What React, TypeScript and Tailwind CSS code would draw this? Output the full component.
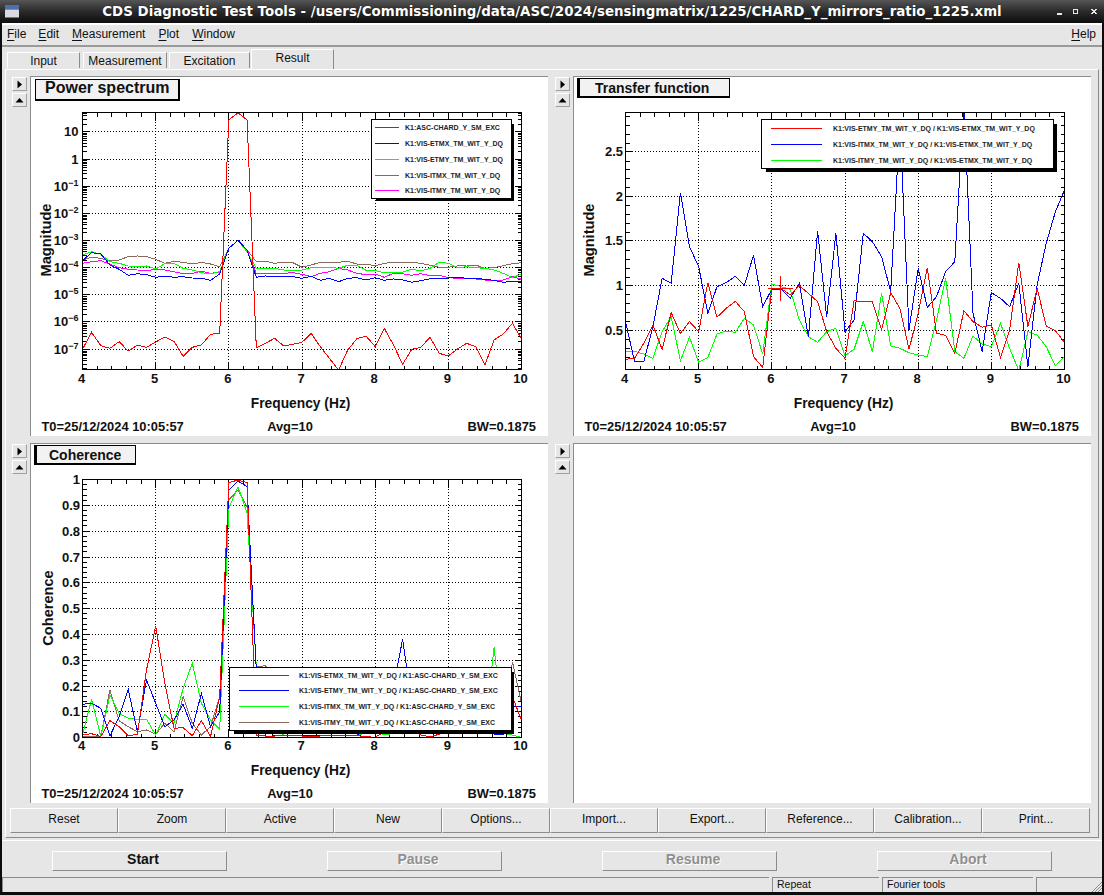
import React from "react";

const RED = "#ff0000", BLUE = "#0000ff", GREEN = "#00ff00", BROWN = "#8a6a5c", MAG = "#ff00ff";

type Trace = { color: string; z: number[] };
type Tick = { y: number; label: string; sup?: string };
type Legend = { x1: number; x2: number; y1: number; y2: number; sx: number; sy: number; lineX1: number; lineX2: number; textX: number; rows: { y: number; color: string; text: string }[] };

type PlotProps = {
  id: string;
  ox: number;
  oy: number;
  top: number;
  bottom: number;
  left: number;
  zBase: number;
  traces: Trace[];
  ticks: Tick[];
  minors: number[];
  title: string;
  titleBox: [number, number, number, number];
  titleSize: number;
  titleX: number;
  titleY: number;
  titleLeft: number;
  titleRight: number;
  yTitle: string;
  yTitleX: number;
  yTitleY: number;
  legend: Legend;
  labelRight: number;
  freqY: number;
  tickY: number;
  footY: number;
  extra?: React.ReactNode;
};

const FONT = "'Liberation Sans', Arial, sans-serif";

function Plot(p: PlotProps) {
  const step = 439 / 48;
  const right = p.left + 439;
  const xs = (n: number) => p.left + n * step;
  const xMajor = [0, 1, 2, 3, 4, 5, 6];
  const xMinor: number[] = [];
  for (let i = 0; i < 30; i++) if (i % 5 !== 0) xMinor.push(p.left + (i * 439) / 30);
  const tx = p.ox;
  return (
    <svg width={517} height={359} viewBox={`${p.ox + 1} ${p.oy + 1} 517 359`} className="block" style={{ fontFamily: FONT }}>
      <defs>
        <clipPath id={p.id}>
          <rect x={p.left} y={p.top} width={439} height={p.bottom - p.top} />
        </clipPath>
      </defs>
      <g shapeRendering="crispEdges" stroke="#000" strokeWidth={1} fill="none">
        {xMajor.slice(1, 6).map((i) => (
          <line key={i} x1={p.left + (i * 439) / 6} x2={p.left + (i * 439) / 6} y1={p.top} y2={p.bottom} strokeDasharray="1 2" />
        ))}
        {p.ticks.filter((t) => t.y > p.top + 2 && t.y < p.bottom - 2).map((t) => (
          <line key={t.y} x1={p.left} x2={right} y1={t.y + 0.5} y2={t.y + 0.5} strokeDasharray="1 2" />
        ))}
        {xMajor.map((i) => {
          const x = p.left + (i * 439) / 6;
          return (
            <g key={i}>
              <line x1={x} x2={x} y1={p.top} y2={p.top + 8} />
              <line x1={x} x2={x} y1={p.bottom} y2={p.bottom - 8} />
            </g>
          );
        })}
        {xMinor.map((x) => (
          <g key={x}>
            <line x1={x} x2={x} y1={p.top} y2={p.top + 4} />
            <line x1={x} x2={x} y1={p.bottom} y2={p.bottom - 4} />
          </g>
        ))}
        {p.ticks.map((t) => (
          <g key={t.y}>
            <line x1={p.left} x2={p.left + 7} y1={t.y + 0.5} y2={t.y + 0.5} />
            <line x1={right} x2={right - 7} y1={t.y + 0.5} y2={t.y + 0.5} />
          </g>
        ))}
        {p.minors.map((y) => (
          <g key={y}>
            <line x1={p.left} x2={p.left + 4} y1={y} y2={y} />
            <line x1={right} x2={right - 4} y1={y} y2={y} />
          </g>
        ))}
      </g>
      <g clipPath={`url(#${p.id})`} fill="none" strokeWidth={1} shapeRendering="crispEdges">
        {p.traces.map((t, i) => (
          <polyline key={i} stroke={t.color} points={t.z.map((z, n) => `${xs(n).toFixed(1)},${(p.zBase + z / 3).toFixed(1)}`).join(" ")} />
        ))}
        {p.extra}
      </g>
      <rect x={p.left} y={p.top} width={439} height={p.bottom - p.top} fill="none" stroke="#000" shapeRendering="crispEdges" />

      <g fontWeight={700} fontSize={13} fill="#111">
        {p.ticks.map((t) => (
          <text key={t.y} x={p.labelRight} y={t.y + 5} textAnchor="end">
            {t.label}
            {t.sup ? <tspan fontSize={9} dy={-5}>{t.sup}</tspan> : null}
          </text>
        ))}
        {xMajor.map((i) => (
          <text key={i} x={p.left + (i * 439) / 6 - 1} y={p.tickY} textAnchor="middle">
            {4 + i}
          </text>
        ))}
        <text x={tx + 270.6} y={p.freqY} fontSize={13.8} textAnchor="middle">Frequency (Hz)</text>
        <text x={p.yTitleX} y={p.yTitleY} fontSize={14.6} textAnchor="middle" transform={`rotate(-90 ${p.yTitleX} ${p.yTitleY})`}>{p.yTitle}</text>
        <text x={tx + 11.5} y={p.footY} fontSize={12.9}>T0=25/12/2024 10:05:57</text>
        <text x={tx + 260} y={p.footY} fontSize={12.9} textAnchor="middle">Avg=10</text>
        <text x={tx + 506} y={p.footY} fontSize={12.9} textAnchor="end">BW=0.1875</text>
      </g>

      <g shapeRendering="crispEdges">
        <rect x={p.legend.x1 + 5} y={p.legend.y1 + 5} width={p.legend.sx - p.legend.x1 - 5} height={p.legend.sy - p.legend.y1 - 5} fill="#000" />
        <rect x={p.legend.x1 + 0.5} y={p.legend.y1 + 0.5} width={p.legend.x2 - p.legend.x1} height={p.legend.y2 - p.legend.y1} fill="#fff" stroke="#000" />
        {p.legend.rows.map((r) => (
          <line key={r.y} x1={p.legend.lineX1} x2={p.legend.lineX2} y1={r.y + 0.5} y2={r.y + 0.5} stroke={r.color} />
        ))}
      </g>
      <g fontWeight={700} fontSize={7} fill="#222">
        {p.legend.rows.map((r) => (
          <text key={r.y} x={p.legend.textX} y={r.y + 3}>{r.text}</text>
        ))}
      </g>

      <g shapeRendering="crispEdges">
        <rect x={p.titleBox[0]} y={p.titleBox[1]} width={p.titleBox[2] - p.titleBox[0]} height={p.titleBox[3] - p.titleBox[1]} fill="#000" />
        <rect
          x={p.titleBox[0] + p.titleLeft}
          y={p.titleBox[1] + 1}
          width={p.titleBox[2] - p.titleBox[0] - p.titleLeft - p.titleRight}
          height={p.titleBox[3] - p.titleBox[1] - 3}
          fill="#f2f2f2"
        />
      </g>
      <text x={p.titleX} y={p.titleY} fontWeight={700} fontSize={p.titleSize} fill="#111">{p.title}</text>
    </svg>
  );
}

/* traces, sampled every 0.125 Hz; values are vertical positions read off the picture */
const p1Red = [748,697,737,745,725,753,736,742,726,711,724,769,742,735,703,700,60,38,60,743,730,715,738,733,727,700,740,775,810,750,716,708,740,685,735,793,748,742,712,760,768,747,730,740,795,720,702,670,716];
const p1Blue = [482,458,462,495,508,526,521,524,532,528,532,530,534,535,541,522,445,421,450,532,528,530,530,530,535,529,541,535,545,535,533,540,533,541,537,540,547,542,536,535,534,532,535,535,538,541,547,544,544];
const p1Green = [465,455,463,485,490,498,499,498,507,491,490,505,510,518,521,515,445,421,455,505,505,505,510,510,510,503,502,502,505,496,496,511,512,518,518,517,507,513,505,487,490,503,500,503,505,510,520,533,522];
const p1Brown = [480,472,475,483,480,470,468,470,478,490,484,487,492,487,492,500,445,421,450,485,484,490,486,488,502,495,487,489,487,484,492,492,497,490,487,487,487,490,496,502,502,498,495,495,505,503,497,491,488];
const p1Mag = [490,485,482,492,503,508,510,512,508,510,515,521,520,514,520,517,445,421,450,521,520,521,520,518,523,530,520,515,505,510,520,524,522,532,520,521,526,521,527,526,533,535,535,537,540,541,540,530,538];

const p2Blue = [665,785,785,680,535,550,278,440,500,640,560,548,529,556,466,620,568,568,595,550,710,393,652,400,695,660,400,425,470,575,65,690,505,622,590,515,485,10,640,755,578,595,620,550,800,555,430,335,270];
const p2Red = [778,775,730,675,748,638,700,665,695,548,652,625,604,635,770,802,565,565,585,557,580,605,695,745,775,602,605,605,690,578,625,748,640,503,700,706,760,632,665,682,675,772,690,488,680,565,678,692,727];
const p2Green = [754,754,762,775,695,650,782,712,787,773,702,693,697,655,675,762,552,560,568,660,710,727,695,685,767,748,665,755,580,738,745,758,765,770,660,535,755,775,708,732,740,670,745,812,695,705,740,797,770];

const p3Red = [795,791,800,752,770,797,793,600,468,640,775,773,797,752,800,680,38,30,38,795,798,798,797,797,798,798,798,797,797,797,797,800,802,785,770,780,780,795,800,793,770,760,780,790,790,790,780,680,750];
const p3Blue = [703,700,715,798,740,658,785,630,700,770,750,703,775,670,770,725,60,33,50,600,800,797,797,797,797,797,797,797,797,797,795,780,775,720,650,508,700,770,780,780,780,780,780,780,700,793,793,708,708];
const p3Green = [795,688,800,675,730,745,748,748,795,733,760,655,580,700,750,778,115,50,130,590,700,780,795,795,795,795,795,795,795,795,795,790,780,795,790,780,780,780,785,785,785,785,780,780,780,532,790,795,802];
const p3Brown = [800,800,798,660,752,770,785,780,793,760,785,680,760,795,770,680,90,60,110,590,587,620,760,780,785,790,790,790,790,790,790,790,785,790,790,785,785,785,790,790,790,790,790,790,790,790,790,575,700];

const p1Ticks: Tick[] = [
  { y: 131, label: "10" },
  { y: 159, label: "1" },
  { y: 186, label: "10", sup: "−1" },
  { y: 213, label: "10", sup: "−2" },
  { y: 240, label: "10", sup: "−3" },
  { y: 267, label: "10", sup: "−4" },
  { y: 294, label: "10", sup: "−5" },
  { y: 321, label: "10", sup: "−6" },
  { y: 349, label: "10", sup: "−7" },
];
const p1Minors: number[] = [];
for (let d = -8; d <= 1; d++) {
  for (let k = 2; k <= 9; k++) {
    const y = 159.5 - (d + Math.log10(k)) * 27.2;
    if (y > 113 && y < 369) p1Minors.push(Math.round(y * 10) / 10);
  }
}

const p2Ticks: Tick[] = [
  { y: 151, label: "2.5" },
  { y: 196, label: "2" },
  { y: 240, label: "1.5" },
  { y: 285, label: "1" },
  { y: 330, label: "0.5" },
];
const p2Minors: number[] = [];
for (let i = -3; i < 30; i++) {
  const y = 330.5 - i * 8.92;
  if (i % 5 !== 0 && y > 113 && y < 369) p2Minors.push(Math.round(y * 10) / 10);
}

const p3Ticks: Tick[] = [
  { y: 479, label: "1" },
  { y: 505, label: "0.9" },
  { y: 531, label: "0.8" },
  { y: 557, label: "0.7" },
  { y: 582, label: "0.6" },
  { y: 608, label: "0.5" },
  { y: 634, label: "0.4" },
  { y: 660, label: "0.3" },
  { y: 686, label: "0.2" },
  { y: 711, label: "0.1" },
  { y: 737, label: "0" },
];
const p3Minors: number[] = [];
for (let i = 0; i < 50; i++) if (i % 5 !== 0) p3Minors.push(Math.round((737.5 - i * 5.16) * 10) / 10);

function SmallButton({ dir }: { dir: "right" | "up" }) {
  return (
    <div className="w-[15px] h-[14px] flex items-center justify-center border border-t-white border-l-white border-b-[#a0a0a0] border-r-[#a0a0a0]">
      <svg width="9" height="9" viewBox="0 0 9 9">
        {dir === "right" ? <path d="M2.5 0.5 L7 4.5 L2.5 8.5 Z" fill="#000" /> : <path d="M0.5 6.5 L4.5 2 L8.5 6.5 Z" fill="#000" />}
      </svg>
    </div>
  );
}

function Cell({ children }: { children?: React.ReactNode }) {
  return (
    <div className="flex">
      <div className="w-[15px] mr-[3px] flex flex-col gap-[2px]">
        <SmallButton dir="right" />
        <SmallButton dir="up" />
      </div>
      <div className="w-[518px] h-[360px] -mt-px border-t border-l border-[#8c8c8c] bg-white">{children}</div>
    </div>
  );
}

function M({ a, b, ml }: { a: string; b: string; ml: string }) {
  return (
    <span className={ml}>
      <span className="underline underline-offset-2">{a}</span>
      {b}
    </span>
  );
}

const actionLabels = ["Reset", "Zoom", "Active", "New", "Options...", "Import...", "Export...", "Reference...", "Calibration...", "Print..."];
const runLabels: [string, boolean][] = [["Start", true], ["Pause", false], ["Resume", false], ["Abort", false]];

export default function App() {
  return (
    <div className="w-[1104px] h-[895px] overflow-hidden bg-[#0c0c0c] px-[2px] text-[#111] text-[12px] font-['Liberation_Sans',Arial,sans-serif]">
      {/* title bar */}
      <div className="h-[23px] -mx-[2px] flex items-center bg-gradient-to-b from-[#565656] via-[#2a2a2a] to-[#0e0e0e]">
        <div className="w-[48px] pl-[5px]">
          <svg width="14" height="13" viewBox="0 0 14 13" className="block">
            <rect width="14" height="13" fill="#d8dbe2" />
            <rect width="14" height="4" fill="#4f6fa8" />
            <rect y="4" width="14" height="1" fill="#8a8f99" />
            <rect y="12" width="14" height="1" fill="#777" />
          </svg>
        </div>
        <div className="flex-1 text-center text-white font-bold text-[13.4px] leading-none whitespace-nowrap font-['DejaVu_Sans',sans-serif] [text-shadow:0_0_1px_#000]">
          CDS Diagnostic Test Tools - /users/Commissioning/data/ASC/2024/sensingmatrix/1225/CHARD_Y_mirrors_ratio_1225.xml
        </div>
        <div className="w-[48px]">
          <svg width="48" height="23" viewBox="0 0 48 23" className="block">
            <g fill="none" stroke="#e8e8e8" shapeRendering="crispEdges">
              <path d="M1 13.5 H6" strokeWidth="2" />
              <rect x="17.5" y="9.5" width="4" height="4" strokeWidth="1.4" />
              <path d="M36 9 L40 14 M40 9 L36 14" strokeWidth="1.6" />
            </g>
          </svg>
        </div>
      </div>

      <div className="h-[869px] bg-[#e6e6e6] flex flex-col">
        {/* menu bar */}
        <div className="h-[24px] shrink-0 flex items-center px-[5px] pb-[2px] border-t-2 border-t-white border-b-2 border-b-[#9a9a9a]">
          <M a="F" b="ile" ml="" />
          <M a="E" b="dit" ml="ml-[12px]" />
          <M a="M" b="easurement" ml="ml-[13px]" />
          <M a="P" b="lot" ml="ml-[13px]" />
          <M a="W" b="indow" ml="ml-[13px]" />
          <span className="flex-1" />
          <M a="H" b="elp" ml="mr-[1px]" />
        </div>

        {/* tabs */}
        <div className="h-[22px] shrink-0 flex items-end pl-[5px]">
          <div className="w-[73px] h-[16px] mb-px flex items-center justify-center border-t border-l border-t-white border-l-white border-r border-r-[#8c8c8c]">Input</div>
          <div className="w-[84px] h-[16px] ml-[3px] mb-px flex items-center justify-center border-t border-l border-t-white border-l-white border-r border-r-[#8c8c8c]">Measurement</div>
          <div className="w-[81px] h-[16px] ml-[2px] mb-px flex items-center justify-center border-t border-l border-t-white border-l-white border-r border-r-[#8c8c8c]">Excitation</div>
          <div className="w-[83px] h-[20px] ml-[1px] pb-[3px] flex items-center justify-center border-t border-l border-t-white border-l-white border-r border-r-[#8c8c8c]">Result</div>
        </div>

        {/* tab body */}
        <div className="h-[769px] shrink-0 mx-[3px] pt-[7px] pl-[6px] border-t border-l border-t-white border-l-white border-r border-b border-r-[#8c8c8c] border-b-[#8c8c8c]">
          <div className="grid grid-cols-[536px_536px] grid-rows-[359px_359px] gap-x-[7px] gap-y-[8px]">
            <Cell>
              <Plot
                id="c1" ox={30} oy={76} top={112.5} bottom={369.5} left={82.5} zBase={100}
                traces={[
                  { color: BROWN, z: p1Brown },
                  { color: MAG, z: p1Mag },
                  { color: GREEN, z: p1Green },
                  { color: BLUE, z: p1Blue },
                  { color: RED, z: p1Red },
                ]}
                ticks={p1Ticks} minors={p1Minors}
                title="Power spectrum" titleBox={[35, 79, 180, 101]} titleSize={16} titleX={45} titleY={93} titleLeft={1} titleRight={2}
                yTitle="Magnitude" yTitleX={51} yTitleY={240}
                labelRight={78.5} tickY={383} freqY={408} footY={430.5}
                legend={{
                  x1: 371, x2: 511, y1: 119, y2: 198, sx: 514, sy: 201, lineX1: 375, lineX2: 399, textX: 405,
                  rows: [
                    { y: 127, color: RED, text: "K1:ASC-CHARD_Y_SM_EXC" },
                    { y: 143, color: BLUE, text: "K1:VIS-ETMX_TM_WIT_Y_DQ" },
                    { y: 159, color: GREEN, text: "K1:VIS-ETMY_TM_WIT_Y_DQ" },
                    { y: 175, color: BROWN, text: "K1:VIS-ITMX_TM_WIT_Y_DQ" },
                    { y: 190, color: MAG, text: "K1:VIS-ITMY_TM_WIT_Y_DQ" },
                  ],
                }}
              />
            </Cell>
            <Cell>
              <Plot
                id="c2" ox={573} oy={76} top={112.5} bottom={369.5} left={625.5} zBase={100}
                traces={[
                  { color: GREEN, z: p2Green },
                  { color: BLUE, z: p2Blue },
                  { color: RED, z: p2Red },
                ]}
                ticks={p2Ticks} minors={p2Minors}
                title="Transfer function" titleBox={[577, 78, 730, 98]} titleSize={14} titleX={595} titleY={93} titleLeft={3} titleRight={1}
                yTitle="Magnitude" yTitleX={594} yTitleY={240}
                labelRight={623} tickY={383} freqY={408} footY={430.5}
                legend={{
                  x1: 761, x2: 1053, y1: 119, y2: 168, sx: 1057, sy: 172, lineX1: 771, lineX2: 822, textX: 833,
                  rows: [
                    { y: 128, color: RED, text: "K1:VIS-ETMY_TM_WIT_Y_DQ / K1:VIS-ETMX_TM_WIT_Y_DQ" },
                    { y: 144, color: BLUE, text: "K1:VIS-ITMX_TM_WIT_Y_DQ / K1:VIS-ETMX_TM_WIT_Y_DQ" },
                    { y: 160, color: GREEN, text: "K1:VIS-ITMY_TM_WIT_Y_DQ / K1:VIS-ETMX_TM_WIT_Y_DQ" },
                  ],
                }}
                extra={<path d="M780.5 276 V301 M768 288.5 H793" stroke={RED} />}
              />
            </Cell>
            <Cell>
              <Plot
                id="c3" ox={30} oy={443} top={479.5} bottom={737.5} left={82.5} zBase={470}
                traces={[
                  { color: BROWN, z: p3Brown },
                  { color: GREEN, z: p3Green },
                  { color: BLUE, z: p3Blue },
                  { color: RED, z: p3Red },
                ]}
                ticks={p3Ticks} minors={p3Minors}
                title="Coherence" titleBox={[34, 445, 136, 465]} titleSize={14} titleX={49} titleY={460} titleLeft={3} titleRight={1}
                yTitle="Coherence" yTitleX={53} yTitleY={608}
                labelRight={80} tickY={750} freqY={775} footY={797.5}
                legend={{
                  x1: 229, x2: 511, y1: 667, y2: 730, sx: 514, sy: 734, lineX1: 239, lineX2: 289, textX: 299,
                  rows: [
                    { y: 675, color: RED, text: "K1:VIS-ETMX_TM_WIT_Y_DQ / K1:ASC-CHARD_Y_SM_EXC" },
                    { y: 690, color: BLUE, text: "K1:VIS-ETMY_TM_WIT_Y_DQ / K1:ASC-CHARD_Y_SM_EXC" },
                    { y: 706, color: GREEN, text: "K1:VIS-ITMX_TM_WIT_Y_DQ / K1:ASC-CHARD_Y_SM_EXC" },
                    { y: 722, color: BROWN, text: "K1:VIS-ITMY_TM_WIT_Y_DQ / K1:ASC-CHARD_Y_SM_EXC" },
                  ],
                }}
              />
            </Cell>
            <Cell />
          </div>

          <div className="mt-[5px] ml-[-2px] flex w-[1080px] h-[25px]">
            {actionLabels.map((l) => (
              <div key={l} className="w-[108px] pb-[4px] flex items-center justify-center border border-t-white border-l-white border-b-[#8c8c8c] border-r-[#8c8c8c]">{l}</div>
            ))}
          </div>
        </div>

        {/* run buttons */}
        <div className="mt-[2px] h-[37px] shrink-0 pt-[10px] border-t border-t-white flex pl-[50px] gap-[100px]">
          {runLabels.map(([l, on]) => (
            <div
              key={l}
              className={
                on
                  ? "w-[175px] h-[20px] pl-[7px] pb-[4px] flex items-center justify-center font-bold text-[14px] border border-t-white border-l-white border-b-[#8c8c8c] border-r-[#8c8c8c]"
                  : "w-[175px] h-[20px] pl-[7px] pb-[4px] flex items-center justify-center font-bold text-[14px] text-[#8f8f8f] [text-shadow:1px_1px_0_#fff] border border-t-white border-l-white border-b-[#8c8c8c] border-r-[#8c8c8c]"
              }
            >
              {l}
            </div>
          ))}
        </div>

        {/* status bar */}
        <div className="h-[15px] shrink-0 flex text-[10.5px] leading-[12px] gap-[3px]">
          <div className="w-[767px] border-t border-l border-t-[#8c8c8c] border-l-[#8c8c8c]" />
          <div className="w-[107px] pl-[4px] border-t border-l border-t-[#8c8c8c] border-l-[#8c8c8c]">Repeat</div>
          <div className="w-[151px] pl-[4px] border-t border-l border-t-[#8c8c8c] border-l-[#8c8c8c]">Fourier tools</div>
          <div className="flex-1 flex justify-end items-end border-t border-l border-t-[#8c8c8c] border-l-[#8c8c8c]">
            <svg width="11" height="11" viewBox="0 0 11 11" className="block">
              <path d="M11 1 L1 11 M11 4 L4 11 M11 7 L7 11" stroke="#8c8c8c" fill="none" />
            </svg>
          </div>
        </div>
      </div>
    </div>
  );
}
